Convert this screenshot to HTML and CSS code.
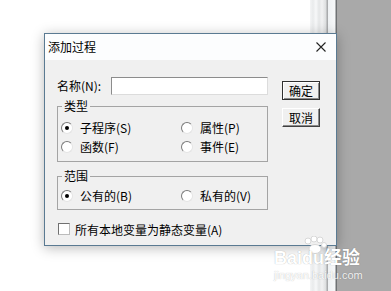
FILE: index.html
```html
<!DOCTYPE html>
<html lang="zh-CN">
<head>
    <meta charset="UTF-8">
    <title>添加过程</title>
    <link rel="stylesheet" href="styles.css">
</head>
<body>
    <div class="desk">
        <div class="page">
            <div class="fill"></div>
            <div class="strip"></div>
        </div>
        <div class="side"></div>

        <div class="dialog">
            <div class="title-bar">
                <span class="title">添加过程</span>
                <svg class="close" width="10" height="10" viewBox="0 0 10 10">
                    <path d="M0.5 0.5 L9.5 9.5 M9.5 0.5 L0.5 9.5" stroke="#222" stroke-width="1.1" fill="none"/>
                </svg>
            </div>

            <div class="dialog-body">
                <div class="main-col">
                    <div class="name-row">
                        <label class="name-label">名称(N):</label>
                        <div class="text-input"></div>
                    </div>

                    <fieldset class="group">
                        <legend>类型</legend>
                        <div class="opts">
                            <div class="opt"><span class="radio checked"></span>子程序(S)</div>
                            <div class="opt"><span class="radio"></span>属性(P)</div>
                            <div class="opt"><span class="radio"></span>函数(F)</div>
                            <div class="opt"><span class="radio"></span>事件(E)</div>
                        </div>
                    </fieldset>

                    <fieldset class="group scope">
                        <legend>范围</legend>
                        <div class="opts">
                            <div class="opt"><span class="radio checked"></span>公有的(B)</div>
                            <div class="opt"><span class="radio"></span>私有的(V)</div>
                        </div>
                    </fieldset>

                    <div class="check-row">
                        <span class="checkbox"></span>所有本地变量为静态变量(A)
                    </div>
                </div>

                <div class="btn-col">
                    <div class="btn default">确定</div>
                    <div class="btn">取消</div>
                </div>
            </div>
        </div>

        <div class="mark">
            <svg class="paw" width="24" height="18" viewBox="0 0 24 18">
                <circle cx="5" cy="5" r="3" fill="#fff" stroke="#d8d8d8"/>
                <circle cx="11" cy="3" r="3" fill="#fff" stroke="#d8d8d8"/>
                <circle cx="17" cy="4" r="3" fill="#fff" stroke="#d8d8d8"/>
                <circle cx="21" cy="9" r="2.5" fill="#fff" stroke="#d8d8d8"/>
                <ellipse cx="12" cy="13" rx="6" ry="4.5" fill="#fff" stroke="#d8d8d8"/>
            </svg>
            <div class="mark-big">Baidu经验</div>
            <div class="mark-small">jingyan.baidu.com</div>
        </div>
    </div>
</body>
</html>
```

FILE: styles.css
```css
body {
    margin: 0;
    font-family: "Noto Sans CJK SC", sans-serif;
    font-size: 12px;
    color: #000;
    background-color: #fff;
}

.desk {
    position: relative;
    width: 391px;
    height: 291px;
    display: flex;
    overflow: hidden;
}

.page {
    width: 337px;
    display: flex;
}

.fill {
    flex: 1;
    background-color: #fff;
}

.strip {
    width: 27px;
    background: linear-gradient(to right,
        #f4f5f6 0, #e9ebec 3px, #f7f8f9 6px, #e4e6e7 9px, #f1f2f3 12px,
        #dcdedf 16px, #a9abad 17px, #a9abad 18px, #eef1f3 18px,
        #f6f8f9 25px, #6f7274 26px, #6f7274 27px);
}

.side {
    flex: 1;
    background-color: #a9a9a9;
}

/* dialog window */
.dialog {
    position: absolute;
    left: 44px;
    top: 33px;
    width: 293px;
    height: 213px;
    box-sizing: border-box;
    border: 1px solid #5a7a92;
    background-color: #f0f0f0;
    box-shadow: 0 2px 12px rgba(0, 0, 0, 0.28);
}

.title-bar {
    height: 26px;
    background-color: #fcfdfe;
    display: flex;
    align-items: center;
    justify-content: space-between;
    padding-left: 3px;
}

.title {
    line-height: 14px;
}

.close {
    margin-right: 10px;
}

.dialog-body {
    display: flex;
    gap: 14px;
    padding: 17px 0 0 12px;
}

.main-col {
    width: 211px;
}

.name-row {
    display: flex;
    align-items: center;
    height: 18px;
}

.name-label {
    width: 54px;
    line-height: 14px;
}

.text-input {
    width: 157px;
    height: 18px;
    box-sizing: border-box;
    background-color: #fff;
    border: 1px solid;
    border-color: #8c8c8c #dcdcdc #dcdcdc #8c8c8c;
}

.group {
    margin: 5px 0 0;
    padding: 0 0 5px 3px;
    border: 1px solid #a4a4a4;
    min-width: 0;
    box-sizing: border-box;
}

.group legend {
    margin-left: 1px;
    padding: 0 2px;
    line-height: 12px;
}

.group.scope {
    margin-top: 8px;
    padding-bottom: 4px;
}

.opts {
    display: grid;
    grid-template-columns: 120px 1fr;
    margin-top: 6px;
}

.scope .opts {
    margin-top: 4px;
}

.opt {
    display: flex;
    align-items: center;
    height: 19px;
}

.radio {
    width: 12px;
    height: 12px;
    box-sizing: border-box;
    margin-right: 7px;
    border-radius: 50%;
    border: 1px solid;
    border-color: #7a7a7a #e4e4e4 #e4e4e4 #7a7a7a;
    background-color: #fff;
    display: grid;
    place-items: center;
}

.radio.checked::after {
    content: "";
    width: 4px;
    height: 4px;
    border-radius: 50%;
    background-color: #000;
}

.check-row {
    display: flex;
    align-items: center;
    height: 14px;
    margin-top: 12px;
    padding-left: 1px;
}

.checkbox {
    width: 12px;
    height: 12px;
    box-sizing: border-box;
    margin-right: 5px;
    background-color: #fff;
    border: 1px solid;
    border-color: #707070 #bcbcbc #bcbcbc #707070;
}

.btn-col {
    display: flex;
    flex-direction: column;
    gap: 8px;
    padding-top: 4px;
}

.btn {
    width: 38px;
    height: 19px;
    box-sizing: border-box;
    display: flex;
    align-items: center;
    justify-content: center;
    background-color: #f0f0f0;
    border: 1px solid;
    border-color: #fff #404040 #404040 #fff;
    box-shadow: inset -1px -1px #8a8a8a;
}

.btn.default {
    border-color: #303030;
    box-shadow: inset 1px 1px #fff, inset -1px -1px #8a8a8a;
}

/* watermark */
.mark {
    position: absolute;
    left: 274px;
    top: 236px;
    width: 90px;
    color: #fff;
    text-shadow: 0 0 1px rgba(0, 0, 0, 0.35);
}

.paw {
    display: block;
    margin-left: 29px;
}

.mark-big {
    font-family: "Liberation Sans", "Noto Sans CJK SC", sans-serif;
    font-size: 18px;
    font-weight: bold;
    line-height: 16px;
    margin-top: -4px;
}

.mark-small {
    font-family: "Liberation Sans", sans-serif;
    font-size: 11px;
    line-height: 12px;
    margin-top: 3px;
    opacity: 0.85;
}
```
